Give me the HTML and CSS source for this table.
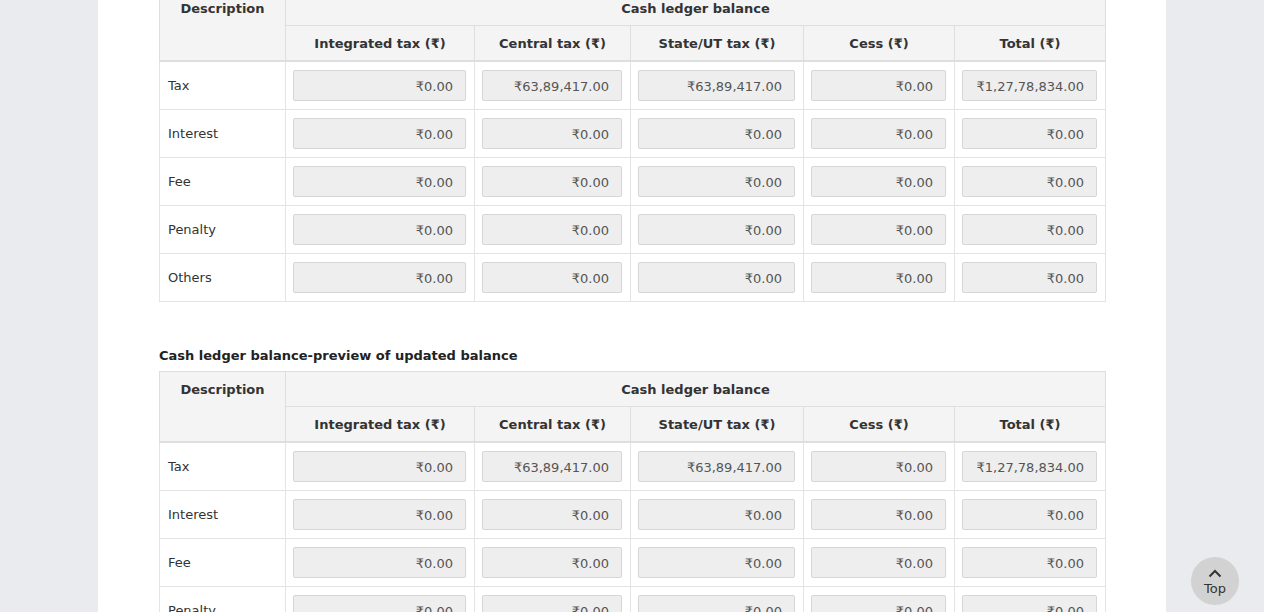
FILE: index.html
```html
<!DOCTYPE html>
<html>
<head>
<meta charset="utf-8">
<link rel="stylesheet" href="styles.css">
</head>
<body>
<div class="page">
  <div class="panel">
    <table class="ledger">
      <colgroup>
        <col class="c-desc"><col class="c-igst"><col class="c-cgst"><col class="c-sgst"><col class="c-cess"><col class="c-total">
      </colgroup>
      <thead>
        <tr class="h1"><th rowspan="2" class="desc-h">Description</th><th colspan="5">Cash ledger balance</th></tr>
        <tr class="h2"><th>Integrated tax (₹)</th><th>Central tax (₹)</th><th>State/UT tax (₹)</th><th>Cess (₹)</th><th>Total (₹)</th></tr>
      </thead>
      <tbody>
        <tr><td>Tax</td><td><input class="amt" value="₹0.00" readonly></td><td><input class="amt" value="₹63,89,417.00" readonly></td><td><input class="amt" value="₹63,89,417.00" readonly></td><td><input class="amt" value="₹0.00" readonly></td><td><input class="amt" value="₹1,27,78,834.00" readonly></td></tr>
        <tr><td>Interest</td><td><input class="amt" value="₹0.00" readonly></td><td><input class="amt" value="₹0.00" readonly></td><td><input class="amt" value="₹0.00" readonly></td><td><input class="amt" value="₹0.00" readonly></td><td><input class="amt" value="₹0.00" readonly></td></tr>
        <tr><td>Fee</td><td><input class="amt" value="₹0.00" readonly></td><td><input class="amt" value="₹0.00" readonly></td><td><input class="amt" value="₹0.00" readonly></td><td><input class="amt" value="₹0.00" readonly></td><td><input class="amt" value="₹0.00" readonly></td></tr>
        <tr><td>Penalty</td><td><input class="amt" value="₹0.00" readonly></td><td><input class="amt" value="₹0.00" readonly></td><td><input class="amt" value="₹0.00" readonly></td><td><input class="amt" value="₹0.00" readonly></td><td><input class="amt" value="₹0.00" readonly></td></tr>
        <tr><td>Others</td><td><input class="amt" value="₹0.00" readonly></td><td><input class="amt" value="₹0.00" readonly></td><td><input class="amt" value="₹0.00" readonly></td><td><input class="amt" value="₹0.00" readonly></td><td><input class="amt" value="₹0.00" readonly></td></tr>
      </tbody>
    </table>

    <h4 class="section-title">Cash ledger balance-preview of updated balance</h4>

    <table class="ledger">
      <colgroup>
        <col class="c-desc"><col class="c-igst"><col class="c-cgst"><col class="c-sgst"><col class="c-cess"><col class="c-total">
      </colgroup>
      <thead>
        <tr class="h1"><th rowspan="2" class="desc-h">Description</th><th colspan="5">Cash ledger balance</th></tr>
        <tr class="h2"><th>Integrated tax (₹)</th><th>Central tax (₹)</th><th>State/UT tax (₹)</th><th>Cess (₹)</th><th>Total (₹)</th></tr>
      </thead>
      <tbody>
        <tr><td>Tax</td><td><input class="amt" value="₹0.00" readonly></td><td><input class="amt" value="₹63,89,417.00" readonly></td><td><input class="amt" value="₹63,89,417.00" readonly></td><td><input class="amt" value="₹0.00" readonly></td><td><input class="amt" value="₹1,27,78,834.00" readonly></td></tr>
        <tr><td>Interest</td><td><input class="amt" value="₹0.00" readonly></td><td><input class="amt" value="₹0.00" readonly></td><td><input class="amt" value="₹0.00" readonly></td><td><input class="amt" value="₹0.00" readonly></td><td><input class="amt" value="₹0.00" readonly></td></tr>
        <tr><td>Fee</td><td><input class="amt" value="₹0.00" readonly></td><td><input class="amt" value="₹0.00" readonly></td><td><input class="amt" value="₹0.00" readonly></td><td><input class="amt" value="₹0.00" readonly></td><td><input class="amt" value="₹0.00" readonly></td></tr>
        <tr><td>Penalty</td><td><input class="amt" value="₹0.00" readonly></td><td><input class="amt" value="₹0.00" readonly></td><td><input class="amt" value="₹0.00" readonly></td><td><input class="amt" value="₹0.00" readonly></td><td><input class="amt" value="₹0.00" readonly></td></tr>
        <tr><td>Others</td><td><input class="amt" value="₹0.00" readonly></td><td><input class="amt" value="₹0.00" readonly></td><td><input class="amt" value="₹0.00" readonly></td><td><input class="amt" value="₹0.00" readonly></td><td><input class="amt" value="₹0.00" readonly></td></tr>
      </tbody>
    </table>
  </div>
</div>

<a class="to-top" href="#">
  <svg width="14" height="9" viewBox="0 0 14 9"><path d="M1.5 7.5 L7 2 L12.5 7.5" fill="none" stroke="#333" stroke-width="2"/></svg>
  <span>Top</span>
</a>
</body>
</html>
```

FILE: styles.css
```css
html, body {
  margin: 0;
  padding: 0;
}
body {
  background: #e9ebee;
  font-family: "DejaVu Sans", Verdana, sans-serif;
  font-size: 13px;
  color: #333;
  overflow: hidden;
}
.page {
  width: 1068px;
  margin: -10px auto 0;
  background: #fff;
  min-height: 800px;
}
.panel {
  padding: 0 61px 40px;
}
.ledger {
  width: 946px;
  border-collapse: collapse;
  table-layout: fixed;
}
.c-desc { width: 126px; }
.c-igst { width: 189px; }
.c-cgst { width: 156px; }
.c-sgst { width: 173px; }
.c-cess { width: 151px; }
.c-total { width: 151px; }

.ledger th {
  background: #f4f4f4;
  border: 1px solid #dedede;
  font-weight: bold;
  color: #333;
  text-align: center;
  padding: 0 8px;
  font-size: 13px;
}
.ledger .h1 th { height: 34px; }
.ledger .h2 th { height: 34px; border-bottom: 2px solid #dedede; }
.ledger th.desc-h {
  vertical-align: top;
  padding-top: 10px;
  border-bottom: 2px solid #dedede;
}
.ledger td {
  border: 1px solid #e4e4e4;
  padding: 8px 8px 8px 7px;
  height: 31px;
  vertical-align: middle;
  color: #333;
}
.ledger td:first-child { padding-left: 8px; }
.amt {
  display: block;
  box-sizing: border-box;
  width: 100%;
  height: 31px;
  margin: 0;
  padding: 2px 12px 0;
  border: 1px solid #d6d6d6;
  border-radius: 2px;
  background: #eeeeee;
  color: #555;
  font-family: "DejaVu Sans", Verdana, sans-serif;
  font-size: 13px;
  text-align: right;
  outline: none;
}
.section-title {
  margin: 46px 0 7px;
  font-size: 13px;
  font-weight: bold;
  color: #222;
  line-height: 16px;
}
.to-top {
  position: fixed;
  left: 1191px;
  top: 557px;
  width: 48px;
  height: 48px;
  border-radius: 50%;
  background: #d2d2d2;
  color: #333;
  text-decoration: none;
  display: flex;
  flex-direction: column;
  align-items: center;
  justify-content: center;
  padding-top: 2px;
  box-sizing: border-box;
  font-size: 13px;
  line-height: 14px;
}
.to-top svg { display: block; margin-bottom: 4px; }
```
